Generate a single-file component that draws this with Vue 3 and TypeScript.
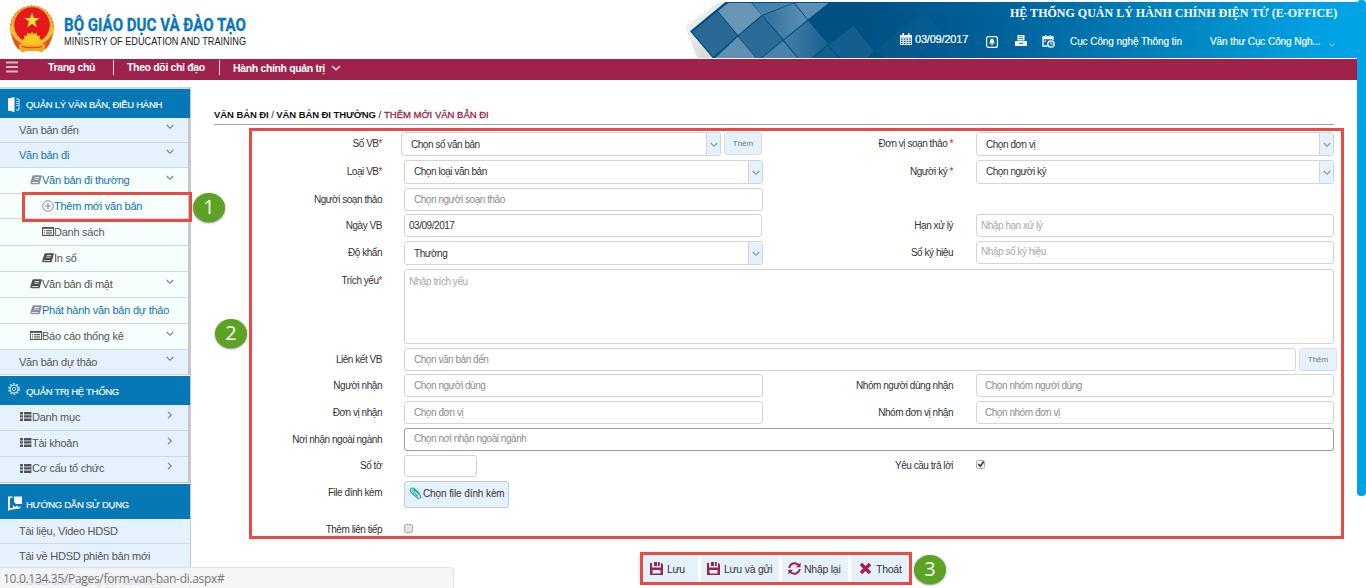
<script setup lang="ts">
interface NavRow {
  text: string
  level: 1 | 2 | 3
  icon?: 'book' | 'plus' | 'list' | 'th'
  arrow?: 'down' | 'right'
  active?: boolean
  soft?: boolean
  h: number
}
interface Group {
  title: string
  icon: 'door' | 'gear' | 'guide'
  rows: NavRow[]
}

const groups: Group[] = [
  {
    title: 'QUẢN LÝ VĂN BẢN, ĐIỀU HÀNH',
    icon: 'door',
    rows: [
      { text: 'Văn bản đến', level: 1, arrow: 'down', h: 25 },
      { text: 'Văn bản đi', level: 1, arrow: 'down', active: true, h: 25 },
      { text: 'Văn bản đi thường', level: 2, icon: 'book', arrow: 'down', active: true, soft: true, h: 26 },
      { text: 'Thêm mới văn bản', level: 3, icon: 'plus', active: true, h: 25 },
      { text: 'Danh sách', level: 3, icon: 'list', h: 27 },
      { text: 'In sổ', level: 3, icon: 'book', h: 26 },
      { text: 'Văn bản đi mật', level: 2, icon: 'book', arrow: 'down', h: 26 },
      { text: 'Phát hành văn bản dự thảo', level: 2, icon: 'book', active: true, soft: true, h: 26 },
      { text: 'Báo cáo thống kê', level: 2, icon: 'list', arrow: 'down', h: 26 },
      { text: 'Văn bản dự thảo', level: 1, arrow: 'down', h: 25 },
    ],
  },
  {
    title: 'QUẢN TRỊ HỆ THỐNG',
    icon: 'gear',
    rows: [
      { text: 'Danh mục', level: 1, icon: 'th', arrow: 'right', h: 26 },
      { text: 'Tài khoản', level: 1, icon: 'th', arrow: 'right', h: 26 },
      { text: 'Cơ cấu tổ chức', level: 1, icon: 'th', arrow: 'right', h: 25 },
    ],
  },
  {
    title: 'HƯỚNG DẪN SỬ DỤNG',
    icon: 'guide',
    rows: [
      { text: 'Tài liệu, Video HDSD', level: 1, h: 25 },
      { text: 'Tải về HDSD phiên bản mới', level: 1, h: 25 },
      { text: 'HDSD chức năng lịch làm việc', level: 1, h: 25 },
    ],
  },
]

const actions = [
  { text: 'Lưu', icon: 'save', cls: 'a1' },
  { text: 'Lưu và gửi', icon: 'save', cls: 'a2' },
  { text: 'Nhập lại', icon: 'reload', cls: 'a3' },
  { text: 'Thoát', icon: 'close', cls: 'a4' },
]
</script>

<template>
  <div class="page">
    <div class="main">
      <header class="top">
        <svg class="emblem" width="48" height="48" viewBox="0 0 48 48">
          <circle cx="24" cy="22.500" r="22" fill="#f0b040" />
          <circle cx="24" cy="22.500" r="21.200" fill="none" stroke="#d98a2b" stroke-width="1.400" stroke-dasharray="2 1.600" />
          <circle cx="24" cy="20" r="17.800" fill="#e5191c" />
          <path d="M24 7.500l1.800 5.600h5.900l-4.700 3.500 1.700 5.600-4.700-3.400-4.700 3.400 1.700-5.600-4.700-3.500h5.900z" fill="#ffe23a" />
          <path d="M3 24q3 10 14 15l-3 7-4-2Q3 36 3 24zM45 24q-3 10-14 15l3 7 4-2q7-8 7-20z" fill="#e2531f" />
          <path d="M2.500 22q3 11 13 16M45.500 22q-3 11-13 16" fill="none" stroke="#f7bd33" stroke-width="3" />
          <path d="M24 27l1.800 2 2.700-1.200.6 2.900 3 .1-.5 2.900 2.600 1.500-1.600 2.300 1.600 2.500H13.800l1.600-2.500-1.600-2.300 2.600-1.500-.5-2.900 3-.1.600-2.900 2.700 1.200z" fill="#ffc91f" />
          <path d="M11 38.500q13 3 26 0v6l-3.500 3-4-1.500h-11l-4 1.500-3.500-3z" fill="#f5a723" />
          <path d="M14 41.500q10 2.500 20 0" fill="none" stroke="#df3a1c" stroke-width="1.200" />
        </svg>
        <svg class="brand" width="200" height="46" viewBox="0 0 200 46">
          <text class="brand-vi" x="1" y="25.500" textLength="182" lengthAdjust="spacingAndGlyphs">BỘ GIÁO DỤC VÀ ĐÀO TẠO</text>
          <text class="brand-en" x="1" y="39.500" textLength="182" lengthAdjust="spacingAndGlyphs">MINISTRY OF EDUCATION AND TRAINING</text>
        </svg>
        <div class="banner">
          <svg class="banner-bg" width="673" height="56" viewBox="72 6 2019 168" preserveAspectRatio="none">
            <defs>
              <linearGradient id="sky" gradientUnits="userSpaceOnUse" x1="90" x2="2091" y1="0" y2="0">
                <stop offset="0" stop-color="#02507f" />
                <stop offset=".25" stop-color="#015083" />
                <stop offset=".47" stop-color="#00629a" />
                <stop offset=".75" stop-color="#0087c3" />
                <stop offset=".93" stop-color="#00a0e1" />
                <stop offset="1" stop-color="#00a4e5" />
              </linearGradient>
              <linearGradient id="fold" x1="0" x2="1" y1="0" y2="1">
                <stop offset="0" stop-color="#ffffff" />
                <stop offset="1" stop-color="#c9c9c9" />
              </linearGradient>
              <linearGradient id="tile" x1="0" x2="1" y1="0" y2="0">
                <stop offset="0" stop-color="#2d6f9b" />
                <stop offset="1" stop-color="#5f92b5" />
              </linearGradient>
              <linearGradient id="tile2" x1="0" x2="1" y1="0" y2="0">
                <stop offset="0" stop-color="#4480a8" />
                <stop offset="1" stop-color="#1a6090" />
              </linearGradient>
            </defs>
            <path d="M74 78L178 6h26L92 94l68 80h-48z" fill="url(#fold)" />
            <path d="M90 94L196 6H2091V174H158z" fill="url(#sky)" />
            <path d="M97 95l75-60 60 72-72 63z" fill="#2a6995" />
            <path d="M174 33l31-24h69l31 36-71 60z" fill="#6a96b6" />
            <path d="M234 110l53 64H166z" fill="#5f8fb1" />
            <path d="M306 49l62 71-67 54h-12l-54-66z" fill="#2a6a97" />
            <path d="M277 9h121l-92 36z" fill="#4a83aa" />
            <path d="M401 10l41 49-71 59-63-71z" fill="url(#tile)" />
            <path d="M404 9h102l-62 49z" fill="#5c8fb3" />
            <path d="M444 62l60 70-50 42h-38l-44-53z" fill="url(#tile2)" />
            <path d="M369 123l43 51H306z" fill="#4a84ab" />
            <path d="M580 78l61 74-20 22H540l-34-40zM504 137l32 37h-76z" fill="#1c6494" opacity=".7" />
            <path d="M650 150l140-118 60 72-85 70H672z" fill="#fff" opacity=".025" />
          </svg>
          <div class="banner-title">HỆ THỐNG QUẢN LÝ HÀNH CHÍNH ĐIỆN TỬ (E-OFFICE)</div>
          <div class="tools">
            <span class="date">
              <svg width="12" height="12" viewBox="0 0 12 12"><path d="M.5 2.500h11v9H.500zM.500 5h11M.500 7.200h11M.500 9.400h11M3.200 5v6.500M6 5v6.500M8.800 5v6.500" fill="none" stroke="#fff" stroke-width=".9" /><path d="M0 2h12v2.500H0zM2.500 0h1.500v2H2.500zM8 0h1.500v2H8z" fill="#fff" /></svg>
              <span>03/09/2017</span>
            </span>
            <svg class="t-bell" width="12" height="12" viewBox="0 0 12 12"><rect x=".6" y=".6" width="10.800" height="10.800" rx="2" fill="none" stroke="#fff" stroke-width="1.200" /><path d="M6 2.500q2 .6 2 3.200l1 1.800H3l1-1.800Q4 3.100 6 2.500zM5 8h2v1.200H5z" fill="#fff" /></svg>
            <svg class="t-drawer" width="12" height="12" viewBox="0 0 12 12"><path d="M2.500 0h7v5.500h-7z" fill="#fff" /><path d="M4 1.700h4M4 3.500h4" stroke="#0a70a9" stroke-width=".8" /><path d="M0 6h12v5H0z" fill="#fff" /><path d="M4.500 7.500v1.200h3V7.500" fill="none" stroke="#0a70a9" /></svg>
            <svg class="t-cal" width="13" height="13" viewBox="0 0 13 13"><path d="M5.500 11H1V2h10v3" fill="none" stroke="#fff" stroke-width="1.300" /><path d="M1 2h10v2.200H1zM3 .3h1.400v2H3zM7.600 .3H9v2H7.600zM2.500 5.500h1.500v1.500H2.500z" fill="#fff" /><circle cx="9" cy="9" r="3.200" fill="#0a78b2" stroke="#fff" stroke-width="1.300" /><path d="M9 7.300V9.200h1.600" fill="none" stroke="#fff" stroke-width=".9" /></svg>
            <span class="dept">Cục Công nghệ Thông tin</span>
            <span class="user">Văn thư Cục Công Ngh...</span>
            <svg class="t-chev" width="6" height="4" viewBox="0 0 6 4"><path d="M.5 .6L3 3 5.500 .6" fill="none" stroke="#b9dcf0" /></svg>
          </div>
        </div>
      </header>

      <nav class="bar">
        <svg class="burger" width="12" height="12" viewBox="0 0 12 12"><path d="M0 1.500h12M0 6h12M0 10.500h12" stroke="#dfb3c3" stroke-width="2" /></svg>
        <span class="n1">Trang chủ</span>
        <span class="n2">Theo dõi chỉ đạo</span>
        <span class="n3">Hành chính quản trị</span>
        <svg class="n-chev" width="10" height="6" viewBox="0 0 10 6"><path d="M1 1l4 3.700L9 1" fill="none" stroke="#f3dfe6" stroke-width="1.500" /></svg>
      </nav>

      <div class="body">
        <aside class="side">
          <section v-for="(g, gi) in groups" :key="g.title" :class="['group', 'g' + gi]">
            <h3>
              <svg v-if="g.icon === 'door'" width="12" height="15" viewBox="0 0 12 15"><path d="M0 1.500L6.500 0v15L0 13.500z" fill="#fff" /><path d="M8 2h3v11H8M8.300 4.500h2M8.300 6.500h2M8.300 8.500h2" fill="none" stroke="#d5eaf6" stroke-width="1" /></svg>
              <svg v-else-if="g.icon === 'gear'" width="12" height="12" viewBox="0 0 12 12"><circle cx="6" cy="6" r="5" fill="none" stroke="#b9dcf0" stroke-width="1.800" stroke-dasharray="1.900 1.240" /><circle cx="6" cy="6" r="4" fill="none" stroke="#b9dcf0" stroke-width="1" /><circle cx="6" cy="6" r="1.700" fill="none" stroke="#b9dcf0" stroke-width="1" /></svg>
              <svg v-else width="14" height="15" viewBox="0 0 14 15"><path d="M0 .5h4.500V2H2v10.500l3-1V9l2 2 2.500-1.500 1 1.500q1.500 0 2.500-1-.5 3-3.500 3H8L4 13.500 0 14.700z" fill="#fff" /><path d="M6 .5h8V8H8L6 6z" fill="#fff" /></svg>
              <span>{{ g.title }}</span>
            </h3>
            <div class="rows">
              <div
                v-for="r in g.rows"
                :key="r.text"
                :class="['row', 'lv' + r.level, { active: r.active, soft: r.soft }]"
                :style="{ height: r.h + 'px' }"
              >
                <svg v-if="r.icon === 'book'" class="ic book" width="12" height="10" viewBox="0 0 12 10"><path d="M3.600 .2h7.700q.7 0 .5.700L9.800 8.500q-.2.700-.9.700H1.800Q0 9.200.3 7.500L2.400 1Q2.700.2 3.600.2z" fill="currentColor" /><path d="M4.700 2.500h4.500M4.200 4.200h4.500M1.700 7.600h6.800" stroke="#f4fdfd" stroke-width=".8" /></svg>
                <svg v-else-if="r.icon === 'plus'" class="ic" width="12" height="12" viewBox="0 0 12 12"><circle cx="6" cy="6" r="5.300" fill="none" stroke="#8a8f98" /><path d="M6 3v6M3 6h6" stroke="#8a8f98" /></svg>
                <svg v-else-if="r.icon === 'list'" class="ic" width="12" height="9" viewBox="0 0 12 9"><rect x=".5" y=".5" width="11" height="8" fill="none" stroke="#555" /><path d="M0 1h12" stroke="#555" stroke-width="1.800" /><path d="M2 3.500h1M4 3.500h6M2 5.200h1M4 5.200h6M2 6.900h1M4 6.900h6" stroke="#555" stroke-width=".9" /></svg>
                <svg v-else-if="r.icon === 'th'" class="ic th" width="12" height="9" viewBox="0 0 12 9"><path d="M0 0h3v2.400H0zM4 0h7.500v2.400H4zM0 3.200h3v2.400H0zM4 3.200h7.500v2.400H4zM0 6.500h3v2.400H0zM4 6.500h7.500v2.400H4z" fill="#555" /></svg>
                <span class="label">{{ r.text }}</span>
                <svg v-if="r.arrow === 'down'" class="arr" width="8" height="6" viewBox="0 0 8 6"><path d="M.8 1L4 4.300 7.200 1" fill="none" stroke="#73808e" stroke-width="1.100" /></svg>
                <svg v-else-if="r.arrow === 'right'" class="arr" width="8" height="8" viewBox="0 0 8 8"><path d="M2 .8L5.300 4 2 7.200" fill="none" stroke="#73808e" stroke-width="1.100" /></svg>
              </div>
            </div>
          </section>
        </aside>

        <main class="content">
          <h2 class="crumb"><b class="c1">VĂN BẢN ĐI <i>/</i> VĂN BẢN ĐI THƯỜNG <i>/</i></b><span>THÊM MỚI VĂN BẢN ĐI</span></h2>

          <form class="form" @submit.prevent>
            <div class="fr h28">
              <label>Số VB<em>*</em></label>
              <div class="sel first"><span>Chọn số văn bản</span><i class="dd"><svg width="8" height="6" viewBox="0 0 8 6"><path d="M.8 1L4 4.300 7.200 1" fill="none" stroke="#8a939c" stroke-width="1.100" /></svg></i></div>
              <button type="button" class="add">Thêm</button>
              <label class="r">Đơn vị soạn thảo <em>*</em></label>
              <div class="sel right"><span>Chọn đơn vị</span><i class="dd"><svg width="8" height="6" viewBox="0 0 8 6"><path d="M.8 1L4 4.300 7.200 1" fill="none" stroke="#8a939c" stroke-width="1.100" /></svg></i></div>
            </div>
            <div class="fr h28">
              <label>Loại VB<em>*</em></label>
              <div class="sel up"><span>Chọn loại văn bản</span><i class="dd"><svg width="8" height="6" viewBox="0 0 8 6"><path d="M.8 1L4 4.300 7.200 1" fill="none" stroke="#8a939c" stroke-width="1.100" /></svg></i></div>
              <label class="r">Người ký <em>*</em></label>
              <div class="sel right up"><span>Chọn người ký</span><i class="dd"><svg width="8" height="6" viewBox="0 0 8 6"><path d="M.8 1L4 4.300 7.200 1" fill="none" stroke="#8a939c" stroke-width="1.100" /></svg></i></div>
            </div>
            <div class="fr h26">
              <label>Người soạn thảo</label>
              <div class="inp tag">Chọn người soạn thảo</div>
            </div>
            <div class="fr h27">
              <label>Ngày VB</label>
              <div class="inp val">03/09/2017</div>
              <label class="r">Hạn xử lý</label>
              <div class="inp right ph">Nhập hạn xử lý</div>
            </div>
            <div class="fr h28">
              <label>Độ khẩn</label>
              <div class="sel"><span>Thường</span><i class="dd"><svg width="8" height="6" viewBox="0 0 8 6"><path d="M.8 1L4 4.300 7.200 1" fill="none" stroke="#8a939c" stroke-width="1.100" /></svg></i></div>
              <label class="r">Số ký hiệu</label>
              <div class="inp right ph up">Nhập số ký hiệu</div>
            </div>
            <div class="fr h79">
              <label>Trích yếu<em>*</em></label>
              <div class="inp area ph">Nhập trích yếu</div>
            </div>
            <div class="fr h26">
              <label>Liên kết VB</label>
              <div class="inp tag link">Chọn văn bản đến</div>
              <button type="button" class="add">Thêm</button>
            </div>
            <div class="fr h27">
              <label>Người nhận</label>
              <div class="inp tag">Chọn người dùng</div>
              <label class="r">Nhóm người dùng nhận</label>
              <div class="inp right tag">Chọn nhóm người dùng</div>
            </div>
            <div class="fr h27">
              <label>Đơn vị nhận</label>
              <div class="inp tag">Chọn đơn vị</div>
              <label class="r">Nhóm đơn vị nhận</label>
              <div class="inp right tag">Chọn nhóm đơn vị</div>
            </div>
            <div class="fr h27">
              <label>Nơi nhận ngoài ngành</label>
              <div class="inp tag wide dark up">Chọn nơi nhận ngoài ngành</div>
            </div>
            <div class="fr h26">
              <label class="lu">Số tờ</label>
              <div class="inp small"></div>
              <label class="r reply">Yêu cầu trả lời</label>
              <span class="chk on"><svg width="8" height="8" viewBox="0 0 8 8"><path d="M1.300 4l2 2.200L6.700 1.500" fill="none" stroke="#333" stroke-width="1.500" /></svg></span>
            </div>
            <div class="fr h39">
              <label>File đính kèm</label>
              <button type="button" class="file">
                <svg width="13" height="13" viewBox="0 0 13 13"><path d="M10.800 6.800L5.600 2Q3.500 .3 1.900 1.900T2.300 5.500l5.600 5.200q1.600 1.400 3 .2 1.400-1.400 0-3L6 3.500Q4.900 2.700 4.200 3.400q-.7.800.2 1.700l4.700 4.400" fill="none" stroke="#1fa5a0" stroke-width="1.100" /></svg>
                <span>Chọn file đính kèm</span>
              </button>
            </div>
            <div class="fr h19">
              <label class="last">Thêm liên tiếp</label>
              <span class="chk"></span>
            </div>
          </form>

          <div class="actions">
            <button v-for="a in actions" :key="a.text" type="button" :class="a.cls">
              <svg v-if="a.icon === 'save'" width="13" height="13" viewBox="0 0 13 13"><path d="M0 1h2v4.500h9V1h.5L13 2.500V13H0zM2.500 8v3.500h8V8z" fill="#9e224b" fill-rule="evenodd" /><path d="M4 0h3v4H4zM8 0h1.800v4H8z" fill="#9e224b" /></svg>
              <svg v-else-if="a.icon === 'reload'" width="13" height="13" viewBox="0 0 13 13"><path d="M1.300 6A5.200 5.200 0 0 1 10.500 3.200M11.700 7A5.200 5.200 0 0 1 2.500 9.800" fill="none" stroke="#9e224b" stroke-width="1.900" /><path d="M12.600 .6v4.600H8zM.4 12.400V7.800H5z" fill="#9e224b" /></svg>
              <svg v-else width="13" height="13" viewBox="0 0 13 13"><path d="M2 2l9 9M11 2l-9 9" stroke="#9e224b" stroke-width="3.500" /></svg>
              <span>{{ a.text }}</span>
            </button>
          </div>
        </main>
      </div>
    </div>
    <div class="scroll"></div>

    <div class="frame f-menu"></div>
    <div class="frame f-form"></div>
    <div class="frame f-act"></div>
    <div class="dot d1">1</div>
    <div class="dot d2">2</div>
    <div class="dot d3">3</div>
    <div class="status">10.0.134.35/Pages/form-van-ban-di.aspx#</div>
  </div>
</template>

<style>
body {
  margin: 0;
  background: #fff;
  overflow: hidden;
}
</style>

<style scoped>
* {
  box-sizing: border-box;
}
.page {
  position: relative;
  display: flex;
  width: 1366px;
  height: 588px;
  overflow: hidden;
  background: #fff;
  font: 10px "Liberation Sans", Arial, sans-serif;
  color: #333;
  white-space: nowrap;
}
svg {
  display: block;
  flex: none;
}
.main {
  width: 1357px;
  height: 588px;
  overflow: hidden;
}
.scroll {
  width: 9px;
  height: 496px;
  border-radius: 4px;
  background: #00a3e4;
}

/* header */
.top {
  display: flex;
  height: 59px;
}
.emblem {
  margin: 5px 0 0 8px;
}
.brand {
  margin: 5px 0 0 7px;
  overflow: visible;
}
.brand-vi {
  font: bold 17.500px Roboto, "Open Sans", sans-serif;
  fill: #0a76ba;
  stroke: #0a76ba;
  stroke-width: 0.300px;
}
.brand-en {
  font: 10.300px "Liberation Sans", Arial, sans-serif;
  fill: #222;
}
.banner {
  position: relative;
  width: 673px;
  height: 56px;
  margin: 2px 0 0 auto;
  color: #fff;
}
.banner-bg {
  position: absolute;
  inset: 0;
}
.banner-title {
  position: relative;
  margin-left: 326px;
  padding-top: 4px;
  font: bold 12px/14px "Liberation Serif", "Times New Roman", serif;
}
.tools {
  position: relative;
  display: flex;
  align-items: center;
  margin-top: 15px;
  margin-left: 216px;
  height: 14px;
}
.date {
  display: flex;
  width: 86px;
  gap: 3px;
  margin-top: -6px;
  font-size: 11px;
  letter-spacing: -0.200px;
  -webkit-text-stroke: 0.200px #fff;
}
.t-bell {
  margin-top: -1px;
}
.t-drawer {
  margin-left: 17px;
  margin-top: -2px;
}
.t-cal {
  margin-left: 15px;
  margin-top: -1px;
}
.dept {
  width: 140px;
  margin-left: 15px;
  letter-spacing: -0.080px;
  -webkit-text-stroke: 0.150px #fff;
}
.dept,
.user {
  margin-top: -1px;
}
.user {
  width: 118px;
  letter-spacing: -0.080px;
  -webkit-text-stroke: 0.150px #fff;
}
.t-chev {
  margin: 6px 0 0 1px;
}
.bar {
  display: flex;
  height: 21px;
  background: #9e224b;
  color: #fff;
  font-size: 10.500px;
  font-weight: bold;
  letter-spacing: -0.350px;
  line-height: 17px;
}
.burger {
  margin: 2px 30px 0 6px;
}
.n1,
.n2 {
  height: 15px;
  margin-top: 1px;
  line-height: 15px;
  border-right: 1px solid #f5e6eb;
}
.n1 {
  width: 66px;
}
.n2 {
  width: 106px;
  padding-left: 13px;
}
.n3 {
  width: 98px;
  padding-left: 13px;
  margin-right: 13px;
  margin-top: 1px;
}
.n-chev {
  margin-top: 6px;
}

/* sidebar */
.body {
  display: flex;
  height: 508px;
}
.side {
  width: 191px;
  height: 501px;
  margin-top: 7px;
  border-top: 2px solid #d3d6d9;
  border-right: 1px solid #c8c8c8;
  overflow: hidden;
}
.group h3 {
  display: flex;
  align-items: center;
  height: 29px;
  margin: 0;
  padding: 1px 0 0 8px;
  background: #0678b6;
  color: #fff;
  font-size: 9.500px;
  font-weight: normal;
  letter-spacing: -0.290px;
  -webkit-text-stroke: 0.150px #fff;
}
.group h3 span {
  margin-left: 6px;
}
.g1 h3 svg {
  margin-top: -5px;
}
.g2 h3 {
  height: 35px;
  padding-top: 6px;
}
.g2 h3 svg {
  margin-top: -3px;
}
.g2 h3 span {
  margin-left: 4px;
}
.g0,
.g1 {
  margin-bottom: 1px;
}
.g0 .rows,
.g1 .rows {
  border-right: 2px solid #c4c6ca;
}
.g1 .rows {
  border-bottom: 1px solid #c4c6ca;
}
.row {
  display: flex;
  align-items: center;
  border-bottom: 1px solid #cfd8dd;
  background: #e5f1fd;
  color: #555;
  font-size: 11px;
  letter-spacing: -0.250px;
}
.g1 .row:last-child {
  border-bottom-color: #e5f1fd;
}
.lv1 {
  padding-left: 19px;
}
.g1 .row {
  padding-bottom: 2px;
}
.g1 .label {
  margin-left: 1px;
}
.th {
  margin-left: 1px;
  margin-right: -1px;
}
.lv2 {
  padding-left: 30px;
  padding-bottom: 2px;
  background: #f7fefe;
}
.lv3 {
  padding-left: 42px;
  padding-bottom: 1px;
  background: #f7fefe;
}
.active {
  color: #0f73ae;
}
.book {
  color: #4c4c4c;
}
.soft .book {
  color: #8b919c;
}
.arr {
  margin: -6px 14px 0 auto;
}
.lv2 .arr,
.g1 .arr {
  margin-top: -4px;
}

/* form */
.content {
  margin-left: 23px;
}
.crumb {
  display: flex;
  width: 1120px;
  height: 45px;
  margin: 0;
  padding-top: 28px;
  border-bottom: 1px solid #a6a6a6;
  color: #111;
  font-size: 9.500px;
  line-height: 13px;
  letter-spacing: -0.080px;
}
.crumb i {
  font-style: normal;
  font-weight: normal;
}
.c1 {
  width: 170px;
}
.crumb span {
  color: #9e224b;
  font-weight: normal;
  letter-spacing: 0;
  -webkit-text-stroke: 0.300px #9e224b;
}
.form {
  width: 1130px;
  padding-top: 7px;
  letter-spacing: -0.460px;
}
.fr {
  display: flex;
  align-items: flex-start;
}
.h19 {
  height: 19px;
}
.h26 {
  height: 26px;
}
.h27 {
  height: 27px;
}
.h28 {
  height: 28px;
}
.h39 {
  height: 39px;
}
.h79 {
  height: 79px;
}
label {
  width: 168px;
  margin-right: 22px;
  text-align: right;
  line-height: 23px;
}
label.r {
  width: 190px;
  margin-left: auto;
  margin-right: 23px;
}
label.last {
  line-height: 19px;
}
label.lu {
  line-height: 21px;
}
label em {
  color: #e02020;
  font-style: normal;
}
.sel,
.inp {
  display: flex;
  align-items: center;
  width: 359px;
  height: 24px;
  border: 1px solid #d4d4d4;
  border-radius: 3px;
  background: #fff;
  color: #333;
}
.sel {
  justify-content: space-between;
}
.sel span {
  padding-left: 9px;
}
.up span {
  padding-bottom: 2px;
}
.first {
  width: 320px;
  margin-left: -3px;
}
.dd {
  display: flex;
  align-items: center;
  justify-content: center;
  width: 14px;
  height: 22px;
  padding-top: 2px;
  border-left: 1px solid #d4d4d4;
  border-radius: 0 2px 2px 0;
  background: #e5f1fd;
}
.inp {
  height: 23px;
}
.sel.right,
.inp.right {
  width: 358px;
  margin-right: 10px;
}
.tag {
  padding-left: 9px;
  padding-bottom: 1px;
  color: #8c8c8c;
}
.right.tag {
  padding-left: 8px;
}
.val,
.ph {
  padding-left: 4px;
}
.val {
  width: 358px;
}
.inp.up {
  padding-bottom: 2px;
}
.ph {
  color: #a8a8a8;
}
.area {
  align-items: flex-start;
  width: 930px;
  height: 75px;
  padding-top: 6px;
}
.link {
  width: 892px;
}
.wide {
  width: 930px;
}
.dark {
  border-color: #9c9c9c;
}
.small {
  width: 73px;
  height: 22px;
}
.add {
  width: 38px;
  height: 23px;
  margin-left: 3px;
  padding: 0;
  border: 1px solid #d9dde2;
  border-radius: 3px;
  background: #e5f1fd;
  color: #777;
  font: 8px "Liberation Sans", Arial, sans-serif;
  letter-spacing: 0;
}
.fr label.reply {
  line-height: 21px;
}
.chk {
  width: 9px;
  height: 9px;
  margin-top: 4px;
  border: 1px solid #b0b0b0;
  border-radius: 2px;
  background: #e4e4e4;
}
.chk.on {
  margin: 5px 359px 0 0;
  background: #f4f4f4;
}
.chk.on svg {
  margin: -1px 0 0 -0.500px;
}
.file {
  display: flex;
  align-items: center;
  width: 105px;
  height: 27px;
  padding: 0 0 2px 5px;
  border: 1px solid #c3cad2;
  border-radius: 3px;
  background: #e5f1fd;
  color: #333;
  font: 10px "Liberation Sans", Arial, sans-serif;
  letter-spacing: -0.100px;
}
.file svg {
  margin-left: -1px;
}
.file span {
  margin-left: 1px;
}
.actions {
  display: flex;
  gap: 3px;
  margin-left: 424px;
  margin-top: 16px;
}
.actions button {
  display: flex;
  align-items: center;
  height: 29px;
  padding: 0 0 2px 12px;
  border: 0;
  background: #e5f1fd;
  color: #333;
  font: 10.500px "Liberation Sans", Arial, sans-serif;
  letter-spacing: -0.250px;
}
.actions span {
  margin-left: 4px;
}
.actions .a1 {
  width: 60px;
}
.actions .a2 {
  width: 78px;
  padding-left: 6px;
}
.actions .a3 {
  width: 66px;
  padding-left: 6px;
}
.actions .a3 span {
  margin-left: 3px;
  padding-top: 1px;
}
.actions .a4 {
  width: 60px;
  padding-left: 8px;
}

/* overlays */
.frame {
  position: absolute;
  border: 3px solid #e94b44;
}
.f-menu {
  left: 22px;
  top: 192px;
  width: 170px;
  height: 30px;
}
.f-form {
  left: 249px;
  top: 128px;
  width: 1095px;
  height: 411px;
}
.f-act {
  left: 640px;
  top: 552px;
  width: 272px;
  height: 33px;
}
.dot {
  position: absolute;
  width: 32px;
  height: 29px;
  border-radius: 50%;
  background: #5ca323;
  box-shadow: 0 1px 2px rgba(0, 0, 0, 0.500);
  color: #fff;
  font: 20px/28px "Open Sans", "Noto Sans", sans-serif;
  text-align: center;
}
.d1 {
  left: 193px;
  top: 193px;
}
.d2 {
  left: 215px;
  top: 319px;
}
.d3 {
  left: 914px;
  top: 555px;
}
.status {
  position: absolute;
  left: 0;
  top: 567px;
  width: 454px;
  height: 22px;
  padding-left: 3px;
  border: 1px solid #e2e2e2;
  border-left: 0;
  border-radius: 0 4px 0 0;
  background: rgba(244, 244, 244, 0.820);
  color: #777;
  font: 12px/22px "Open Sans", "Noto Sans", sans-serif;
  letter-spacing: -0.310px;
}
</style>
